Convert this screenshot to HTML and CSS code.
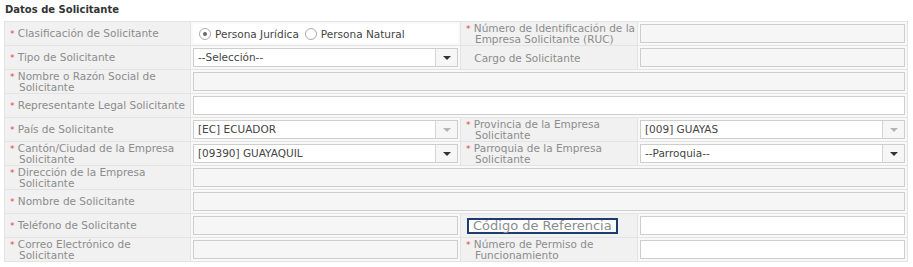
FILE: index.html
```html
<html>
    <head>
        <title>Datos de Solicitante</title>
        <link rel="stylesheet" href="styles.css">
    </head>
    <body>
        <div class="section-title">Datos de Solicitante</div>
        <table class="form-table">
            <colgroup>
                <col class="col-label">
                <col class="col-field">
                <col class="col-label2">
                <col class="col-field">
            </colgroup>
            <tr>
                <th><span class="req">*</span> Clasificación de Solicitante</th>
                <td>
                    <div class="radio-group">
                        <span class="radio checked"></span> Persona Jurídica
                        <span class="radio"></span> Persona Natural
                    </div>
                </td>
                <th class="two-line"><span class="req">*</span> Número de Identificación de la<br><span class="indent">Empresa Solicitante (RUC)</span></th>
                <td><div class="input"></div></td>
            </tr>
            <tr>
                <th><span class="req">*</span> Tipo de Solicitante</th>
                <td>
                    <div class="select white"><span class="select-text">--Selección--</span><span class="arrow"></span></div>
                </td>
                <th><span class="noreq"></span> Cargo de Solicitante</th>
                <td><div class="input"></div></td>
            </tr>
            <tr>
                <th class="two-line"><span class="req">*</span> Nombre o Razón Social de<br><span class="indent">Solicitante</span></th>
                <td colspan="3"><div class="input"></div></td>
            </tr>
            <tr>
                <th><span class="req">*</span> Representante Legal Solicitante</th>
                <td colspan="3"><div class="input white"></div></td>
            </tr>
            <tr>
                <th><span class="req">*</span> País de Solicitante</th>
                <td>
                    <div class="select white"><span class="select-text">[EC] ECUADOR</span><span class="arrow disabled"></span></div>
                </td>
                <th class="two-line"><span class="req">*</span> Provincia de la Empresa<br><span class="indent">Solicitante</span></th>
                <td>
                    <div class="select white"><span class="select-text">[009] GUAYAS</span><span class="arrow disabled"></span></div>
                </td>
            </tr>
            <tr>
                <th class="two-line"><span class="req">*</span> Cantón/Ciudad de la Empresa<br><span class="indent">Solicitante</span></th>
                <td>
                    <div class="select white"><span class="select-text">[09390] GUAYAQUIL</span><span class="arrow"></span></div>
                </td>
                <th class="two-line"><span class="req">*</span> Parroquia de la Empresa<br><span class="indent">Solicitante</span></th>
                <td>
                    <div class="select white"><span class="select-text">--Parroquia--</span><span class="arrow"></span></div>
                </td>
            </tr>
            <tr>
                <th class="two-line"><span class="req">*</span> Dirección de la Empresa<br><span class="indent">Solicitante</span></th>
                <td colspan="3"><div class="input"></div></td>
            </tr>
            <tr>
                <th><span class="req">*</span> Nombre de Solicitante</th>
                <td colspan="3"><div class="input"></div></td>
            </tr>
            <tr>
                <th><span class="req">*</span> Teléfono de Solicitante</th>
                <td><div class="input"></div></td>
                <th><span class="focus-label">Código de Referencia</span></th>
                <td><div class="input white"></div></td>
            </tr>
            <tr>
                <th class="two-line"><span class="req">*</span> Correo Electrónico de<br><span class="indent">Solicitante</span></th>
                <td><div class="input"></div></td>
                <th class="two-line"><span class="req">*</span> Número de Permiso de<br><span class="indent">Funcionamiento</span></th>
                <td><div class="input white"></div></td>
            </tr>
        </table>
    </body>
</html>
```

FILE: styles.css
```css
body {
    margin: 0;
    padding: 4px 6px 0 4px;
    background-color: #ffffff;
    font-family: "DejaVu Sans", Verdana, sans-serif;
    font-size: 10px;
    color: #777;
}

.section-title {
    font-weight: bold;
    color: #333;
    padding-left: 1px;
    height: 17px;
    line-height: 12px;
}

.form-table {
    width: 903px;
    table-layout: fixed;
    border-collapse: collapse;
    border: 1px solid #e3e3e3;
    font-family: "DejaVu Sans", Verdana, sans-serif;
    font-size: 10.5px;
}

.col-label {
    width: 186px;
}

.col-label2 {
    width: 177px;
}

.col-field {
    width: 270px;
}

.form-table th {
    background-color: #f1f1f1;
    font-weight: normal;
    text-align: left;
    color: #8c8c8c;
    padding: 0 4px 0 5px;
    border: 1px solid #e3e3e3;
    white-space: nowrap;
    overflow: hidden;
    line-height: 12px;
}

.form-table th.two-line {
    line-height: 10px;
    padding-top: 0;
}

.form-table td {
    background-color: #f9f9f9;
    padding: 2px 2px;
    border: 1px solid #e3e3e3;
}

.req {
    color: #e0464a;
    font-size: 9px;
}

.noreq {
    display: inline-block;
    width: 5px;
}

.indent {
    padding-left: 9px;
}

.input {
    height: 17px;
    border: 1px solid #cdcdcd;
    background-color: #f6f6f6;
}

.input.white {
    background-color: #ffffff;
}

.select {
    display: flex;
    height: 17px;
    border: 1px solid #cdcdcd;
    background-color: #ffffff;
    color: #444;
}

.select-text {
    flex: 1;
    line-height: 17px;
    padding-left: 4px;
}

.arrow {
    width: 21px;
    border-left: 1px solid #d5d5d5;
    background-color: #f6f6f6;
    position: relative;
}

.arrow::after {
    content: "";
    position: absolute;
    left: 7px;
    top: 7px;
    border-left: 4px solid transparent;
    border-right: 4px solid transparent;
    border-top: 4px solid #333;
}

.arrow.disabled::after {
    border-top-color: #b5b5b5;
}

.radio-group {
    display: flex;
    align-items: center;
    gap: 4px;
    color: #444;
    padding-left: 4px;
    background-color: #ffffff;
    height: 19px;
}

.radio {
    display: inline-block;
    width: 10px;
    height: 10px;
    border: 1px solid #aaa;
    border-radius: 50%;
    background-color: #fff;
    position: relative;
    margin-left: 2px;
}

.radio.checked::after {
    content: "";
    position: absolute;
    left: 3px;
    top: 3px;
    width: 4px;
    height: 4px;
    border-radius: 50%;
    background-color: #666;
}

.focus-label {
    display: inline-block;
    border: 2px solid #1d3d70;
    padding: 0 4px 0 4px;
    font-size: 13px;
    line-height: 12px;
    color: #8c8c8c;
    background-color: #fff;
    margin-left: 1px;
}
```
